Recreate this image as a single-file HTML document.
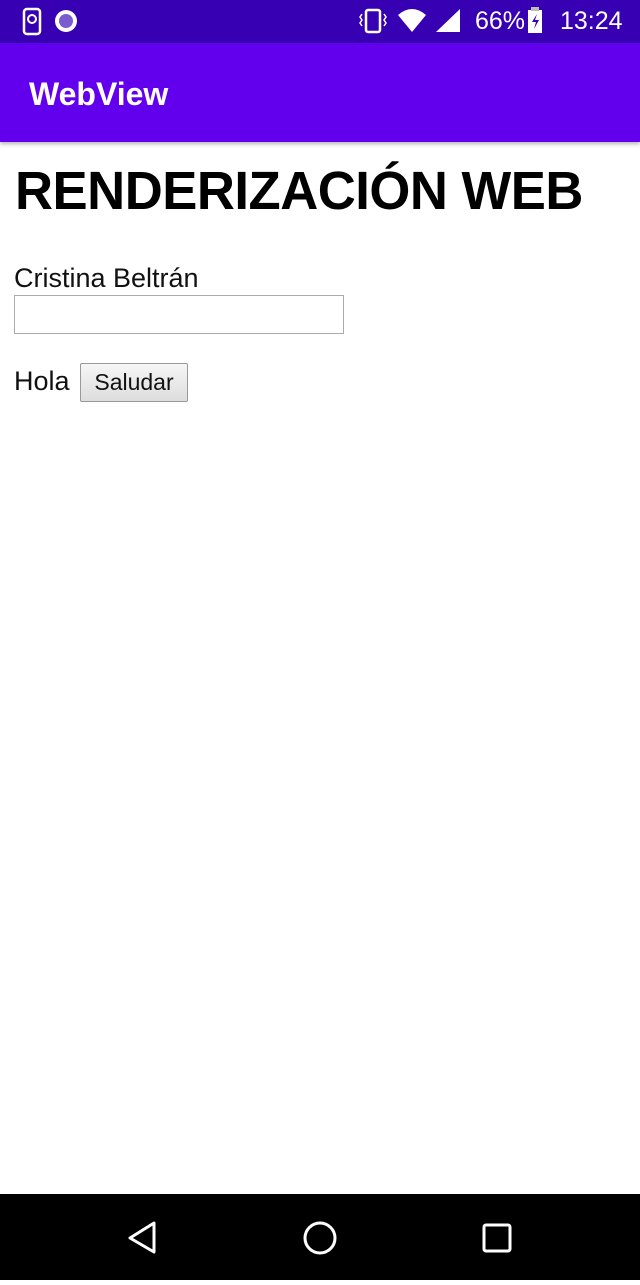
<!DOCTYPE html>
<html><head><meta charset="utf-8"><style>
*{margin:0;padding:0;box-sizing:border-box}
body{width:640px;height:1280px;background:#fff;font-family:"Liberation Sans",sans-serif;position:relative;overflow:hidden}
.sb{position:absolute;top:0;left:0;width:640px;height:43px;background:#3700b3;color:#fff}
.ab{position:absolute;top:43px;left:0;width:640px;height:99px;background:#6200ee;box-shadow:0 2px 4px rgba(0,0,0,.3)}
.ab span{position:absolute;left:29px;top:33px;font-size:32px;font-weight:bold;color:#fff}
h1{position:absolute;left:15px;top:160px;font-size:54px;font-weight:bold;letter-spacing:-0.5px;white-space:nowrap;transform:scaleX(0.975);transform-origin:left}
.t{position:absolute;font-size:27px;color:#111}
.in{position:absolute;left:14px;top:295px;width:330px;height:39px;border:1px solid #aaa}
.bt{position:absolute;left:80px;top:363px;width:108px;height:39px;border:1px solid #999;border-radius:2px;background:linear-gradient(#f6f6f6,#ddd);font-size:23px;text-align:center;line-height:37px;color:#111}
.nb{position:absolute;bottom:0;left:0;width:640px;height:86px;background:#000}
</style></head><body>
<div class="sb">
<svg width="640" height="43" style="position:absolute;left:0;top:0">
<rect x="24" y="9" width="16" height="25" rx="3" fill="none" stroke="#fff" stroke-width="2.5"/>
<circle cx="32" cy="19" r="4" fill="none" stroke="#fff" stroke-width="2"/>
<circle cx="66" cy="21" r="11" fill="#fff"/><circle cx="66" cy="21" r="7" fill="#7a5ccf"/>
<rect x="366" y="10" width="14" height="22" rx="2" fill="none" stroke="#fff" stroke-width="2.5"/>
<path d="M362 14l-2 3 2 3-2 3 2 3M384 14l2 3-2 3 2 3-2 3" stroke="#fff" stroke-width="1.5" fill="none"/>
<path d="M398 15 Q412 3 426 15 L412 32Z" fill="#fff"/>
<path d="M436 32 L460 32 L460 9Z" fill="#fff"/>
<rect x="528" y="10" width="14" height="23" fill="#fff"/><rect x="531" y="7" width="8" height="4" fill="#bbb"/>
<path d="M537 14l-5 8h4l-2 7 5-9h-4z" fill="#3700b3"/>
</svg>
<span style="position:absolute;left:475px;top:7px;font-size:25px">66%</span>
<span style="position:absolute;left:560px;top:7px;font-size:25px">13:24</span>
</div>
<div class="ab"><span>WebView</span></div>
<h1>RENDERIZACIÓN WEB</h1>
<div class="t" style="left:14px;top:263px">Cristina Beltrán</div>
<div class="in"></div>
<div class="t" style="left:14px;top:366px">Hola</div>
<div class="bt">Saludar</div>
<div class="nb"><svg width="640" height="86">
<path d="M154 29 L130 44 L154 58Z" fill="none" stroke="#fff" stroke-width="3" stroke-linejoin="round"/>
<circle cx="320" cy="44" r="15" fill="none" stroke="#fff" stroke-width="3"/>
<rect x="484" y="31" width="26" height="26" rx="2" fill="none" stroke="#fff" stroke-width="3"/>
</svg></div>
</body></html>
